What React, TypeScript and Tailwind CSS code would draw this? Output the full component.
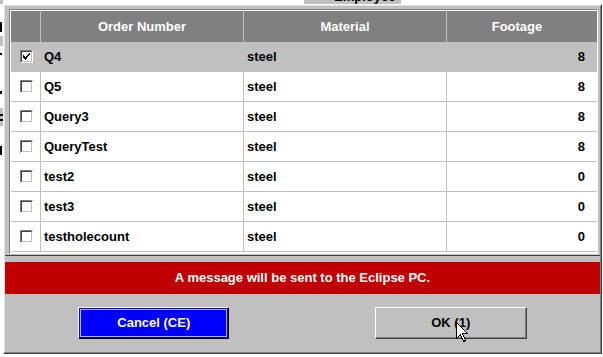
import React from "react";

interface Row {
  order: string;
  material: string;
  footage: number;
  checked?: boolean;
}

const rows: Row[] = [
  { order: "Q4", material: "steel", footage: 8, checked: true },
  { order: "Q5", material: "steel", footage: 8 },
  { order: "Query3", material: "steel", footage: 8 },
  { order: "QueryTest", material: "steel", footage: 8 },
  { order: "test2", material: "steel", footage: 0 },
  { order: "test3", material: "steel", footage: 0 },
  { order: "testholecount", material: "steel", footage: 0 },
];

function CheckBox({ checked }: { checked?: boolean }) {
  return (
    <div className="w-[13px] h-[13px] border border-t-[#808080] border-l-[#808080] border-b-white border-r-white">
      <div className="w-full h-full bg-white border border-t-[#404040] border-l-[#404040] border-b-[#c0c0c0] border-r-[#c0c0c0] flex items-center justify-center">
        {checked && (
          <svg width="7" height="7" viewBox="0 0 7 7" shapeRendering="crispEdges">
            <path d="M0 2h1v1H0zM0 3h2v1H0zM0 4h3v1H0zM1 5h3v1H1zM2 6h1v1H2zM3 3h1v2H3zM4 2h1v2H4zM5 1h1v2H5zM6 0h1v2H6z" fill="#000" />
          </svg>
        )}
      </div>
    </div>
  );
}

function Cursor() {
  return (
    <svg
      className="absolute left-[456px] top-[322px]"
      width="13"
      height="21"
      viewBox="0 0 13 21"
      shapeRendering="crispEdges"
    >
      <path
        d="M0.5 0.5 L0.5 16.5 L4.5 12.5 L7.5 19.5 L9.5 18.5 L6.5 11.5 L11.5 11.5 Z"
        fill="#fff"
        stroke="#000"
        strokeWidth="1"
      />
    </svg>
  );
}

export default function App() {
  return (
    <div className="relative w-[603px] h-[357px] overflow-hidden bg-white font-['Liberation_Sans',Arial,sans-serif] font-bold text-[13px]">
      {/* window behind the dialog */}
      <div className="absolute left-[304px] top-0 w-[97px] h-[4px] bg-[#c0c0c0] overflow-hidden">
        <span className="absolute left-[30px] top-[-11px] text-black text-[13px] leading-[15px]">Employee</span>
      </div>
      <div className="absolute left-0 top-0 w-[3px] h-[4px] bg-[#c0c0c0]" />
      <div className="absolute left-0 top-[22px] w-[2px] h-[10px] bg-black" />
      <div className="absolute left-0 top-[36px] w-[3px] h-[10px] bg-[#c0c0c0]" />
      <div className="absolute left-0 top-[53px] w-[2px] h-[2px] bg-black" />
      <div className="absolute left-0 top-[91px] w-[2px] h-[3px] bg-black" />
      <div className="absolute left-0 top-[108px] w-[3px] h-[18px] bg-[#c0c0c0]" />
      <div className="absolute left-0 top-[114px] w-[3px] h-[2px] bg-black" />
      <div className="absolute left-0 top-[119px] w-[3px] h-[2px] bg-black" />
      <div className="absolute left-0 top-[146px] w-[2px] h-[9px] bg-black" />

      {/* dialog */}
      <div className="absolute left-[3px] top-[4px] w-[599px] h-[350px] border border-t-white border-l-white border-r-[#404040] border-b-[#404040]">
        <div className="w-full h-full bg-[#c0c0c0] border border-t-[#dfdfdf] border-l-[#dfdfdf] border-r-[#808080] border-b-[#808080] flex flex-col">
          {/* table */}
          <div className="ml-[4px] mt-[3px] w-[589px] border border-t-[#808080] border-l-[#808080] border-b-white border-r-white">
            <div className="border-t border-l border-b border-white">
              <div className="flex h-[31px] bg-[#808080] text-white">
                <div className="w-[30px] border-r border-[#c0c0c0]" />
                <div className="w-[203px] border-r border-[#c0c0c0] flex items-center justify-center">Order Number</div>
                <div className="w-[203px] border-r border-[#c0c0c0] flex items-center justify-center">Material</div>
                <div className="w-[150px] pr-[10px] flex items-center justify-center">Footage</div>
              </div>
              {rows.map((r) => (
                <div
                  key={r.order}
                  className={
                    "flex h-[30px] border-b border-[#c0c0c0] text-black " +
                    (r.checked ? "bg-[#c0c0c0]" : "bg-white")
                  }
                >
                  <div className="w-[30px] border-r border-[#c0c0c0] flex items-center justify-center pl-[1px]">
                    <CheckBox checked={r.checked} />
                  </div>
                  <div className="w-[203px] border-r border-[#c0c0c0] flex items-center pl-[3px]">{r.order}</div>
                  <div className="w-[203px] border-r border-[#c0c0c0] flex items-center pl-[3px]">{r.material}</div>
                  <div className="w-[150px] pr-[12px] flex items-center justify-end">{r.footage}</div>
                </div>
              ))}
            </div>
          </div>

          <div className="mt-[1px] h-[1px] bg-[#404040]" />

          {/* message */}
          <div className="mt-[6px] h-[32px] bg-[#c00000] text-white flex items-center justify-center">
            A message will be sent to the Eclipse PC.
          </div>

          {/* buttons */}
          <div className="mt-[13px] grid grid-cols-2">
            <div className="flex justify-center">
              <button className="w-[151px] h-[32px] border border-t-white border-l-white border-r-black border-b-black bg-[#0000ff] p-[1px]">
                <div className="w-full h-full border border-[#b4b4d8] flex items-center justify-center text-white">
                  Cancel (CE)
                </div>
              </button>
            </div>
            <div className="flex justify-center">
              <button className="w-[152px] h-[32px] border border-t-white border-l-white border-r-[#404040] border-b-[#404040] bg-[#c0c0c0]">
                <div className="w-full h-full border-r border-b border-[#808080] flex items-center justify-center text-black">
                  OK (1)
                </div>
              </button>
            </div>
          </div>
        </div>
      </div>

      <Cursor />
    </div>
  );
}
